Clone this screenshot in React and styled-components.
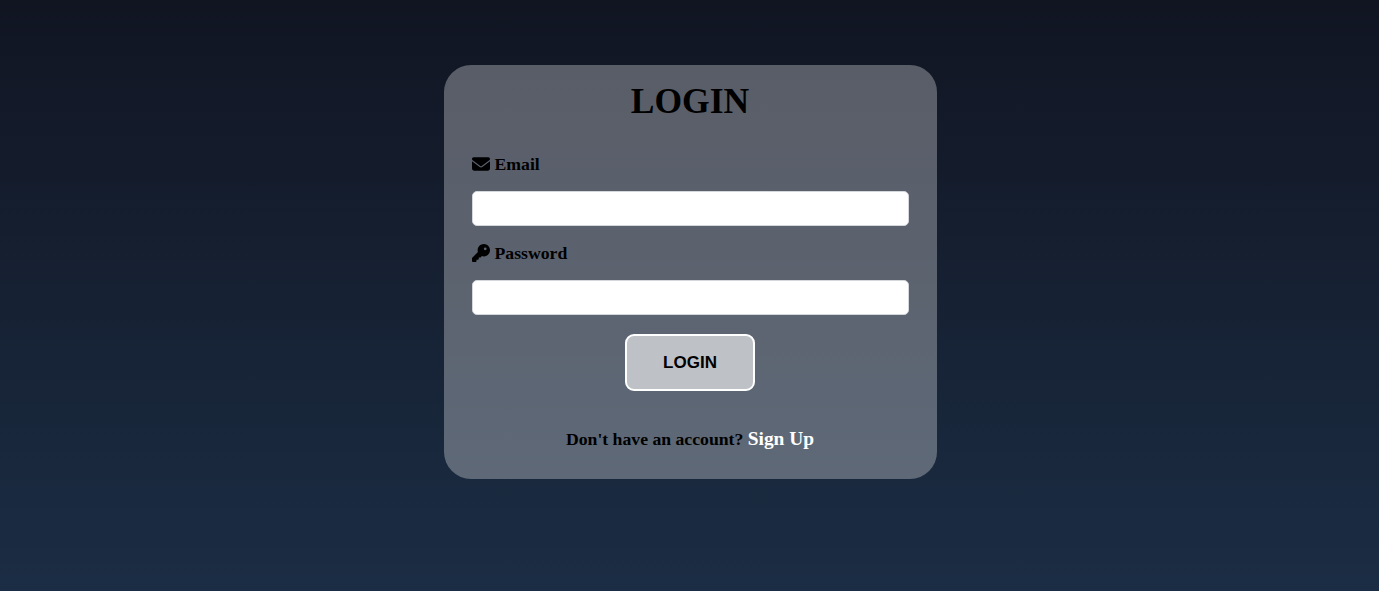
import React from "react";
import styled, { createGlobalStyle } from "styled-components";
import { FaEnvelope, FaKey } from "react-icons/fa6";

const GlobalStyle = createGlobalStyle`
  *, *::before, *::after { box-sizing: border-box; }
  body {
    margin: 0;
    font-family: "Liberation Serif", "Times New Roman", serif;
  }
`;

const Page = styled.main`
  min-height: 591px;
  height: 100vh;
  padding: 65px 0 0 1px;
  display: flex;
  align-items: flex-start;
  justify-content: center;
  background: linear-gradient(to bottom, #111522, #1b2d44);
`;

const Card = styled.form`
  width: 493px;
  height: 414px;
  padding: 16px 28px 0;
  display: flex;
  flex-direction: column;
  border-radius: 27px;
  background: rgba(255, 255, 255, 0.3);
`;

const Title = styled.h1`
  margin: 0 0 33px;
  font-size: 35.5px;
  line-height: 40px;
  text-align: center;
  color: #000;
`;

const Field = styled.div`
  display: flex;
  flex-direction: column;
  margin-bottom: 17px;
`;

const Label = styled.label`
  display: flex;
  align-items: center;
  gap: 5px;
  height: 20px;
  margin-bottom: 17px;
  font-size: 17.7px;
  font-weight: bold;
  color: #000;

  svg {
    width: 18px;
    height: 18px;
  }
`;

const Input = styled.input`
  width: 100%;
  height: 35px;
  padding: 0 9px;
  border: 1px solid #d4d7dc;
  border-radius: 5px;
  background: #fff;
  font-size: 16px;
  outline: none;
`;

const SubmitButton = styled.button`
  align-self: center;
  width: 130px;
  height: 57px;
  margin-top: 2px;
  padding: 0;
  border: 2px solid #fff;
  border-radius: 9px;
  background: rgba(255, 255, 255, 0.6);
  color: #000;
  font: bold 17px "Liberation Sans", Arial, sans-serif;
`;

const Prompt = styled.p`
  margin: 36px 0 0;
  height: 24px;
  line-height: 24px;
  text-align: center;
  font-size: 17.7px;
  font-weight: bold;
  color: #000;
`;

const SignUpLink = styled.a`
  font-size: 19.4px;
  color: #fff;
  text-decoration: none;
`;

export default function App() {
  return (
    <>
      <GlobalStyle />
      <Page>
        <Card>
          <Title>LOGIN</Title>
          <Field>
            <Label htmlFor="email"><FaEnvelope />Email</Label>
            <Input id="email" type="email" />
          </Field>
          <Field>
            <Label htmlFor="password"><FaKey />Password</Label>
            <Input id="password" type="password" />
          </Field>
          <SubmitButton type="button">LOGIN</SubmitButton>
          <Prompt>
            Don't have an account? <SignUpLink href="#">Sign Up</SignUpLink>
          </Prompt>
        </Card>
      </Page>
    </>
  );
}
